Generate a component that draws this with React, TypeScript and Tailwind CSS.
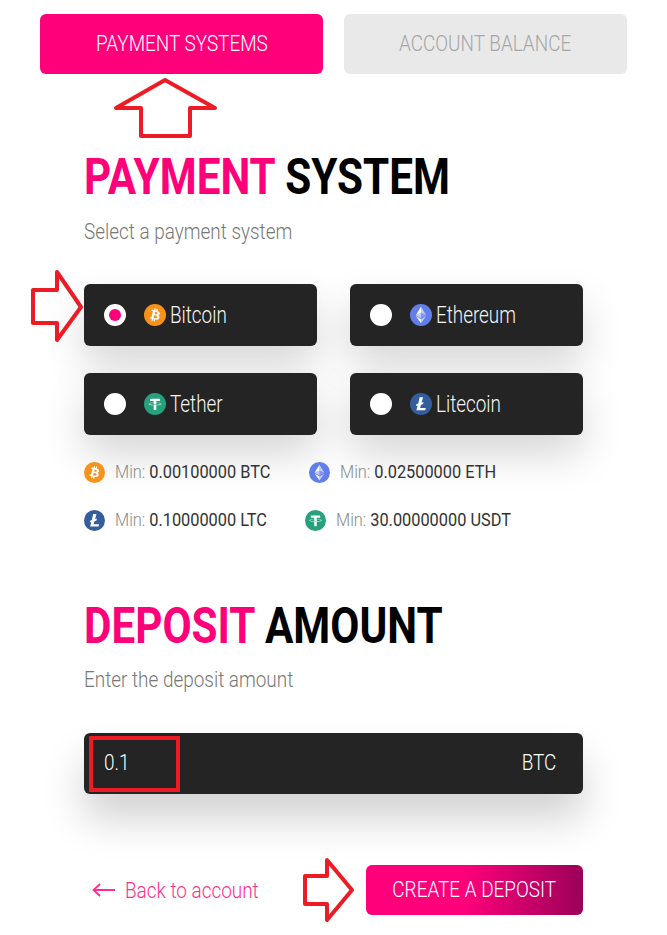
const cond = "inline-block origin-left scale-x-[0.86] whitespace-nowrap";

function Coin({ kind, size }: { kind: "btc" | "eth" | "usdt" | "ltc"; size: number }) {
  const bg = { btc: "#f7931a", eth: "#627eea", usdt: "#26a17b", ltc: "#345d9d" }[kind];
  return (
    <svg width={size} height={size} viewBox="0 0 32 32" className="shrink-0">
      <circle cx="16" cy="16" r="16" fill={bg} />
      {kind === "btc" && (
        <path
          fill="#fff"
          d="M23 14c.3-2.100-1.300-3.200-3.500-4l.7-2.800-1.700-.4-.7 2.700-1.400-.3.700-2.700-1.700-.4-.7 2.800-3.400-.9-.5 1.800 1.200.3c.7.200.8.600.8 1l-1.900 7.700c-.1.200-.3.500-.8.400l-1.200-.3-.8 1.900 3.300.8-.7 2.900 1.700.4.700-2.800 1.400.3-.7 2.800 1.700.4.700-2.900c2.900.5 5.100.3 6-2.300.8-2.100 0-3.300-1.500-4.100 1.100-.3 2-1 2.200-2.600zm-3.900 5.400c-.5 2.100-4 1-5.200.7l.9-3.700c1.200.3 4.900.9 4.300 3zm.6-5.500c-.5 1.900-3.400.9-4.300.7l.8-3.300c1 .2 4 .7 3.500 2.600z"
        />
      )}
      {kind === "eth" && (
        <>
          <path fill="#fff" fillOpacity="0.6" d="M16 4v8.900l7.500 3.300z" />
          <path fill="#fff" d="M16 4 8.500 16.200l7.500-3.300z" />
          <path fill="#fff" fillOpacity="0.6" d="M16 22v6l7.500-10.400z" />
          <path fill="#fff" d="M16 28v-6l-7.500-4.400z" />
          <path fill="#fff" fillOpacity="0.2" d="m16 20.600 7.500-4.400-7.500-3.300z" />
          <path fill="#fff" fillOpacity="0.6" d="m8.500 16.200 7.500 4.400v-7.700z" />
        </>
      )}
      {kind === "usdt" && (
        <path
          fill="#fff"
          d="M17.900 17.300v0c-.1 0-.7.100-1.900.1-1 0-1.700 0-1.900-.1v0c-3.700-.2-6.500-.8-6.500-1.600s2.800-1.400 6.500-1.600v2.500c.2 0 .9.100 1.900.1 1.200 0 1.800-.1 1.900-.1v-2.500c3.700.2 6.500.8 6.500 1.600s-2.800 1.400-6.500 1.600zm0-3.400v-2.200h5.200V8.200H8.900v3.500h5.200v2.200c-4.200.2-7.400 1-7.400 2s3.200 1.800 7.400 2v7h3.800v-7c4.200-.2 7.400-1 7.400-2s-3.200-1.800-7.400-2z"
        />
      )}
      {kind === "ltc" && (
        <path fill="#fff" d="M14 6h5l-2.200 8.200 3-1.100-.8 2.900-3 1.100-1.300 4.700H23l-.9 3.200H9.300l1.900-7-2.600 1 .7-2.700 2.700-1z" />
      )}
    </svg>
  );
}

function PayOption({ label, kind, checked }: { label: string; kind: "btc" | "eth" | "usdt" | "ltc"; checked?: boolean }) {
  return (
    <div className="flex h-[62px] w-[233px] items-center rounded-md bg-[#242424] pl-[20px] text-white">
      <span className="flex h-[22px] w-[22px] items-center justify-center rounded-full bg-white">
        {checked && <span className="h-[12px] w-[12px] rounded-full bg-[#ff007a]" />}
      </span>
      <span className="ml-[18px]">
        <Coin kind={kind} size={22} />
      </span>
      <span className="mt-[2px] ml-[4px] inline-block origin-left scale-x-[0.82] text-[23px] font-light whitespace-nowrap text-[#f5f5f5]">{label}</span>
    </div>
  );
}

function MinRow({ kind, amount, left, gap }: { kind: "btc" | "eth" | "usdt" | "ltc"; amount: string; left: number; gap: number }) {
  return (
    <div className="absolute top-0 flex h-[22px] items-center" style={{ left }}>
      <Coin kind={kind} size={21} />
      <span className={`text-[19px] ${cond}`} style={{ marginLeft: gap }}>
        <span className="font-light text-[#8a8a8a]">Min: </span>
        <span className="font-normal text-[#333]">{amount}</span>
      </span>
    </div>
  );
}

function Heading({ pink, dark }: { pink: string; dark: string }) {
  return (
    <h2 className="inline-block h-[60px] origin-left scale-x-[0.845] text-[50px] leading-[60px] font-bold whitespace-nowrap text-black">
      <span className="text-[#ff007a]">{pink}</span> {dark}
    </h2>
  );
}

function Arrow({ className, w, h, points }: { className: string; w: number; h: number; points: string }) {
  return (
    <svg width={w} height={h} viewBox={`0 0 ${w} ${h}`} className={`absolute ${className}`}>
      <polygon points={points} fill="none" stroke="#ed1c24" strokeWidth="4" strokeLinejoin="round" />
    </svg>
  );
}

export default function App() {
  return (
    <div className="relative h-[935px] w-[667px] overflow-hidden bg-white font-['Roboto',sans-serif]">
      <div className="flex gap-[21px] pt-[14px] pl-[40px]">
        <div className="flex h-[60px] w-[283px] items-center justify-center rounded-md bg-[#ff007a] pb-[2px] text-[22px] font-light text-white">
          <span className="inline-block scale-x-[0.86] whitespace-nowrap">PAYMENT SYSTEMS</span>
        </div>
        <div className="flex h-[60px] w-[283px] items-center justify-center rounded-md bg-[#e9e9e9] pb-[2px] text-[22px] font-light text-[#a6a6a6]">
          <span className="inline-block scale-x-[0.86] whitespace-nowrap">ACCOUNT BALANCE</span>
        </div>
      </div>

      <section className="pt-[73px] pl-[84px]">
        <Heading pink="PAYMENT" dark="SYSTEM" />
        <p className={`mt-[12px] h-[26px] text-[22px] leading-[26px] font-light text-[#777] ${cond}`}>Select a payment system</p>
        <div className="mt-[38px] grid w-[499px] grid-cols-[233px_233px] gap-x-[33px] gap-y-[27px]">
          <div className="rounded-md shadow-[0_20px_40px_rgba(0,0,0,0.16)]"><PayOption label="Bitcoin" kind="btc" checked /></div>
          <div className="rounded-md shadow-[0_20px_40px_rgba(0,0,0,0.16)]"><PayOption label="Ethereum" kind="eth" /></div>
          <div className="rounded-md shadow-[0_20px_40px_rgba(0,0,0,0.16)]"><PayOption label="Tether" kind="usdt" /></div>
          <div className="rounded-md shadow-[0_20px_40px_rgba(0,0,0,0.16)]"><PayOption label="Litecoin" kind="ltc" /></div>
        </div>
        <div className="relative mt-[26px] h-[22px]">
          <MinRow kind="btc" amount="0.00100000 BTC" left={0} gap={10} />
          <MinRow kind="eth" amount="0.02500000 ETH" left={225} gap={10} />
        </div>
        <div className="relative mt-[26px] h-[22px]">
          <MinRow kind="ltc" amount="0.10000000 LTC" left={0} gap={10} />
          <MinRow kind="usdt" amount="30.00000000 USDT" left={221} gap={10} />
        </div>
      </section>

      <section className="pt-[65px] pl-[84px]">
        <Heading pink="DEPOSIT" dark="AMOUNT" />
        <p className={`mt-[11px] h-[26px] text-[22px] leading-[26px] font-light text-[#777] ${cond}`}>Enter the deposit amount</p>
        <div className="mt-[39px] flex h-[61px] w-[499px] items-center justify-between rounded-md bg-[#242424] pr-[27px] pb-[2px] pl-[20px] text-[22px] font-light text-white shadow-[0_25px_40px_rgba(0,0,0,0.18)]">
          <span className={cond}>0.1</span>
          <span className="inline-block origin-right scale-x-[0.86]">BTC</span>
        </div>
        <div className="mt-[71px] flex w-[499px] items-center justify-between">
          <div className="ml-[8px] flex items-center text-[#ff2d8e]">
            <svg width="24" height="14" viewBox="0 0 24 14" fill="none" stroke="#ff2d8e" strokeWidth="1.800">
              <path d="M23 7H2M8 1 1.500 7 8 13" />
            </svg>
            <span className={`ml-[9px] text-[22px] font-light ${cond}`}>Back to account</span>
          </div>
          <div className="flex h-[50px] w-[217px] items-center justify-center rounded-md bg-gradient-to-r from-[#ff007a] from-[45%] to-[#9c0059] pb-[1px] text-[22px] font-light text-white">
            <span className="inline-block scale-x-[0.86] whitespace-nowrap">CREATE A DEPOSIT</span>
          </div>
        </div>
      </section>

      <Arrow className="left-[112px] top-[76px]" w={106} h={64} points="53,4 103,32 78,32 78,60 29,60 29,32 4,32" />
      <Arrow className="left-[28px] top-[269px]" w={56} h={74} points="5,21 29,21 29,3 53,38 29,71 29,54 5,54" />
      <Arrow className="left-[302px] top-[857px]" w={56} h={66} points="3,19 25,19 25,3 50,33 25,63 25,47 3,47" />
      <div className="absolute top-[736px] left-[89px] h-[56px] w-[91px] border-[4px] border-[#ed1c24]" />
    </div>
  );
}
